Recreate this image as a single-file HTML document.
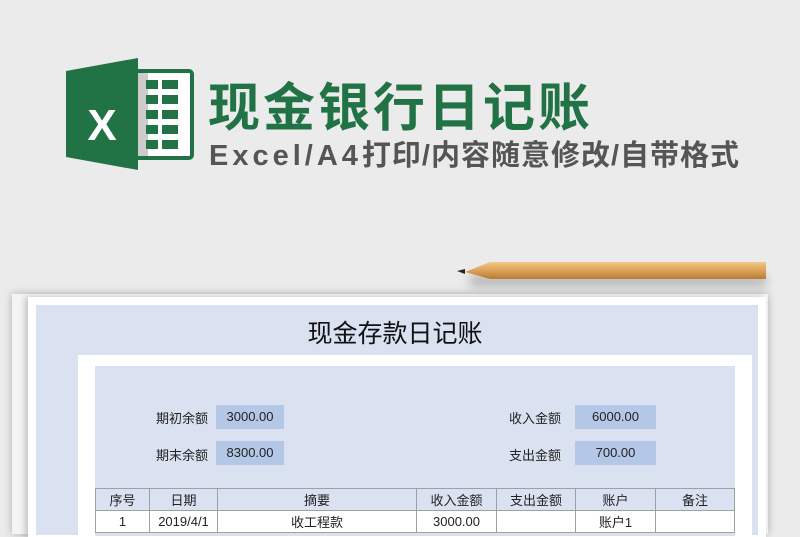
<!DOCTYPE html>
<html><head><meta charset="utf-8"><style>
*{margin:0;padding:0;box-sizing:border-box}
body{width:800px;height:526px;overflow:hidden;background:#ebebeb;position:relative;font-family:"Liberation Sans","Noto Sans CJK SC",sans-serif}
.abs{position:absolute}
.t1{left:208px;top:66px;font-size:52px;font-weight:bold;color:#217346;letter-spacing:3px;white-space:nowrap}
.t2{left:209px;top:132px;font-size:29px;color:#555;white-space:nowrap;letter-spacing:1px;font-weight:bold}
.t2 span{letter-spacing:4px}
.lbl{font-size:13px;color:#222}
.val{background:#b4c7e7;font-size:13px;color:#222;text-align:center;line-height:24px;height:24px}
table{border-collapse:collapse;position:absolute;left:95px;top:488px;width:640px;font-size:13px}
td{border:1px solid #a0a0a0;text-align:center;height:22px;color:#222}
tr.h td{background:#dae2f2}
tr.r td{background:#fff}
</style></head><body>
<svg class="abs" style="left:66px;top:58px" width="130" height="112" viewBox="0 0 130 112">
<rect x="66" y="13" width="60" height="87" rx="3" fill="#fff" stroke="#217346" stroke-width="4"/>
<rect x="72" y="15" width="10" height="83" fill="#ccc"/>
<g fill="#217346">
<rect x="80" y="22" width="12" height="9"/><rect x="96" y="22" width="16" height="9"/>
<rect x="80" y="37" width="12" height="9"/><rect x="96" y="37" width="16" height="9"/>
<rect x="80" y="52" width="12" height="9"/><rect x="96" y="52" width="16" height="9"/>
<rect x="80" y="67" width="12" height="9"/><rect x="96" y="67" width="16" height="9"/>
<rect x="80" y="82" width="12" height="9"/><rect x="96" y="82" width="16" height="9"/>
</g>
<path d="M0 13 L72 0 L72 112 L0 99 Z" fill="#217346"/>
<text x="36" y="82" font-size="44" font-weight="bold" fill="#fff" text-anchor="middle" font-family="Liberation Sans">X</text>
</svg>
<div class="abs t1">现金银行日记账</div>
<div class="abs t2"><span>Excel/A4</span>打印/内容随意修改/自带格式</div>
<!-- pencil -->
<div class="abs" style="left:470px;top:276px;width:296px;height:10px;background:rgba(0,0,0,.25);filter:blur(5px)"></div>
<svg class="abs" style="left:455px;top:260px" width="315" height="24">
<defs><linearGradient id="w" x1="0" y1="0" x2="0" y2="1"><stop offset="0" stop-color="#f3c886"/><stop offset=".5" stop-color="#dca25a"/><stop offset="1" stop-color="#b87b34"/></linearGradient></defs>
<path d="M35 2 L311 2 L311 19 L35 19 L10 12 Z" fill="url(#w)"/>
<path d="M2 11 L10 9 L10 14 Z" fill="#222"/>
</svg>
<!-- paper -->
<div class="abs" style="left:12px;top:294px;width:756px;height:240px;background:#f4f4f4;box-shadow:0 0 8px rgba(0,0,0,.25)"></div>
<div class="abs" style="left:28px;top:297px;width:738px;height:240px;background:#fff;box-shadow:-3px 0 6px rgba(0,0,0,.2)"></div>
<div class="abs" style="left:36px;top:305px;width:722px;height:230px;background:#dae2f2"></div>
<div class="abs" style="left:0;top:314px;width:790px;text-align:center;font-size:25px;color:#111">现金存款日记账</div>
<div class="abs" style="left:78px;top:355px;width:674px;height:180px;background:#fff"></div>
<div class="abs" style="left:95px;top:366px;width:640px;height:170px;background:#dae2f2"></div>
<div class="abs lbl" style="left:156px;top:408px">期初余额</div>
<div class="abs val" style="left:216px;top:405px;width:68px">3000.00</div>
<div class="abs lbl" style="left:156px;top:445px">期末余额</div>
<div class="abs val" style="left:216px;top:441px;width:68px">8300.00</div>
<div class="abs lbl" style="left:509px;top:408px">收入金额</div>
<div class="abs val" style="left:575px;top:405px;width:81px">6000.00</div>
<div class="abs lbl" style="left:509px;top:445px">支出金额</div>
<div class="abs val" style="left:575px;top:441px;width:81px">700.00</div>
<table>
<tr class="h"><td style="width:54px">序号</td><td style="width:68px">日期</td><td style="width:199px">摘要</td><td style="width:80px">收入金额</td><td style="width:79px">支出金额</td><td style="width:80px">账户</td><td>备注</td></tr>
<tr class="r"><td>1</td><td>2019/4/1</td><td>收工程款</td><td>3000.00</td><td></td><td>账户1</td><td></td></tr>
</table>
</body></html>
